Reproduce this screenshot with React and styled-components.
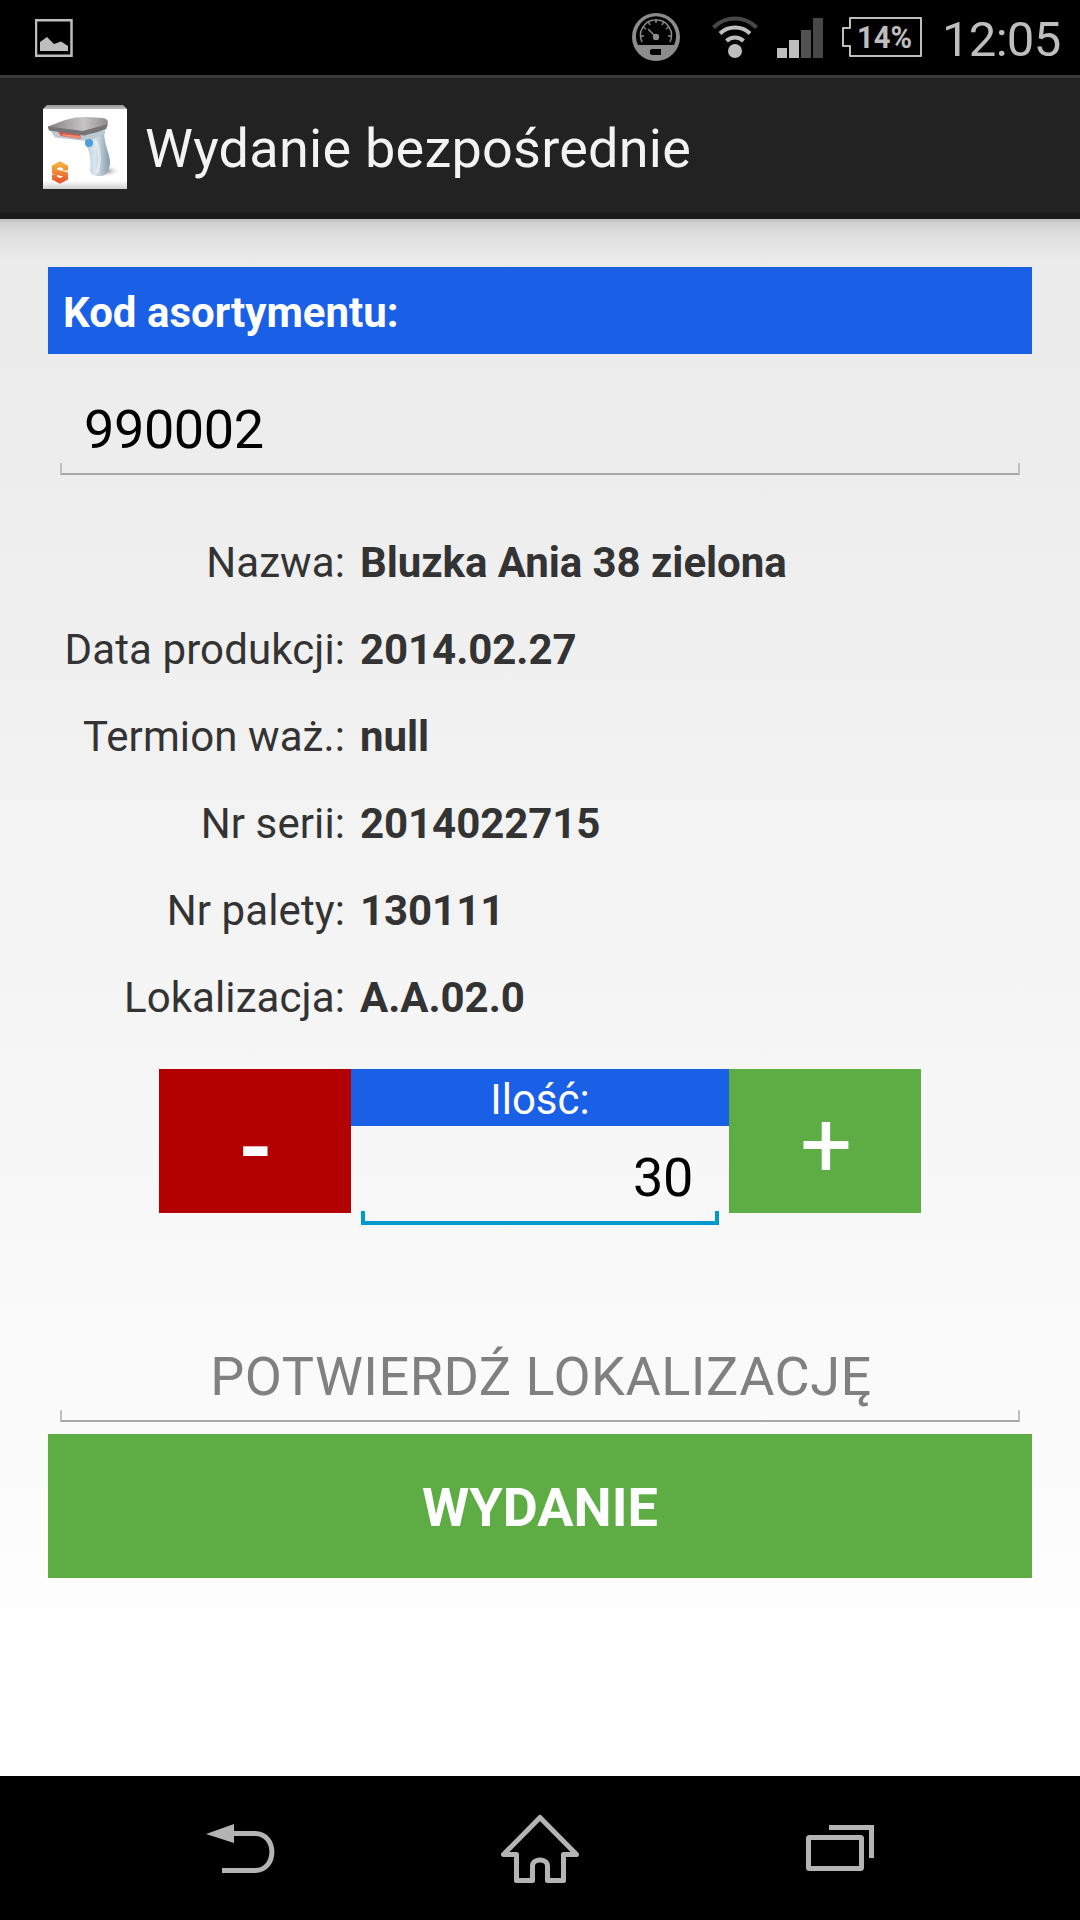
import React, { useState } from "react";
import styled, { createGlobalStyle } from "styled-components";

const GlobalStyle = createGlobalStyle`
  * {
    box-sizing: border-box;
  }
  body {
    margin: 0;
    font-family: Roboto, "Noto Sans", sans-serif;
  }
`;

const Screen = styled.div`
  display: flex;
  flex-direction: column;
  width: 1080px;
  height: 1920px;
  overflow: hidden;
  background-color: #000;
`;

const StatusBar = styled.div`
  display: flex;
  justify-content: space-between;
  height: 75px;
  padding: 0 20px 0 35px;
  color: #bebebe;
`;

const StatusIcons = styled.div`
  display: flex;
`;

const Clock = styled.span`
  width: 118px;
  font-size: 49px;
  line-height: 80px;
  letter-spacing: -0.7px;
  white-space: nowrap;
`;

const ActionBar = styled.header`
  display: flex;
  align-items: center;
  height: 144px;
  padding: 3px 43px 0;
  border-top: 3px solid #3a3a3a;
  border-bottom: 6px solid #1b1b1b;
  background-color: #222;
`;

const Title = styled.h1`
  margin: 3px 0 0 18px;
  color: #f3f3f3;
  font-size: 54px;
  font-weight: 400;
  line-height: 64px;
  letter-spacing: 0.25px;
`;

const Content = styled.main`
  flex: 1;
  padding: 48px 48px 0;
  background: linear-gradient(
      rgba(0, 0, 0, 0.16) 0px,
      rgba(0, 0, 0, 0.16) 3px,
      rgba(0, 0, 0, 0.11) 3px,
      rgba(0, 0, 0, 0.04) 20px,
      transparent 40px
    ),
    linear-gradient(#eaeaea, #fff 96%);
`;

const SectionLabel = styled.div`
  height: 87px;
  padding: 0 15px;
  background-color: #1960e7;
  color: white;
  font-size: 42px;
  font-weight: 700;
  line-height: 92px;
`;

const Field = styled.div`
  display: flex;
  flex-direction: column;
  margin: ${(props) => props.$margin};
`;

const Input = styled.input`
  width: 100%;
  height: ${(props) => props.$height};
  padding: ${(props) => props.$padding};
  border: 0;
  outline: 0;
  background: transparent;
  color: #000;
  font-family: inherit;
  font-size: 54px;
  letter-spacing: -0.4px;
  text-align: ${(props) => props.$align || "left"};

  &::placeholder {
    color: #808080;
    letter-spacing: 0.5px;
    opacity: 1;
  }
`;

const Underline = styled.div`
  height: ${(props) => (props.$active ? "14px" : "12px")};
  border: ${(props) => (props.$active ? "4px solid #0099cc" : "2px solid #c0c0c0")};
  border-top: 0;
  border-bottom-color: ${(props) => (props.$active ? "#0099cc" : "#a8a8a8")};
`;

const Details = styled.dl`
  display: grid;
  grid-template-columns: 297px 1fr;
  grid-auto-rows: 87px;
  column-gap: 15px;
  margin: 44px 0 0;
  color: #333;
  font-size: 42px;
  line-height: 87px;
`;

const Name = styled.dt`
  letter-spacing: 0.1px;
  text-align: right;
  white-space: nowrap;
`;

const Value = styled.dd`
  margin: 0;
  font-weight: 700;
  letter-spacing: -0.06px;
`;

const Stepper = styled.div`
  display: grid;
  grid-template-columns: 192px 378px 192px;
  justify-content: center;
  height: 156px;
  margin-top: 28px;
`;

const StepButton = styled.button`
  height: 144px;
  padding: ${(props) => props.$padding};
  border: 0;
  background-color: ${(props) => props.$color};
  color: white;
  font-family: inherit;
  font-size: ${(props) => props.$size};
  font-weight: ${(props) => props.$weight};
  line-height: 120px;
`;

const QuantityLabel = styled.div`
  height: 57px;
  background-color: #1960e7;
  color: white;
  font-size: 42px;
  line-height: 61px;
  text-align: center;
`;

const Submit = styled.button`
  width: 100%;
  height: 144px;
  margin-top: 12px;
  padding: 3px 0 0;
  border: 0;
  background-color: #5dad44;
  color: white;
  font-family: inherit;
  font-size: 54px;
  font-weight: 700;
`;

const NavBar = styled.nav`
  display: flex;
  height: 144px;
  padding-left: 206px;
`;

const PictureIcon = () => (
  <svg width="40" height="75" fill="#bebebe">
    <path d="M1 20.200H36.500V55.700H1Z" fill="none" stroke="#bebebe" strokeWidth="2.500" />
    <path d="M5 42 12 37 19 44 26 41.500 33 46V51H5Z" />
  </svg>
);

const GaugeIcon = () => (
  <svg width="80" height="75">
    <circle cx="24" cy="37" r="24" fill="#8c8c8c" />
    <path d="M6 45A20 20 0 1 1 42 45Z" fill="#000" />
    <path
      d="M10 42A15.500 15.500 0 1 1 38 42M8 36H12M11 27 14 29M16 21 18 25M24 19V23M32 21 30 25M37 27 34 29M40 36H36M16 29 24 37"
      fill="none"
      stroke="#8c8c8c"
      strokeWidth="1.500"
    />
    <circle cx="24" cy="37" r="3.200" fill="#8c8c8c" />
    <path d="M20 49H29V55H20L18 54V50Z" fill="#000" />
  </svg>
);

const WifiIcon = () => (
  <svg width="65" height="75" fill="none" strokeWidth="4">
    <path d="M1.500 27.500A30 30 0 0 1 44.500 27.500" stroke="#474747" />
    <path d="M8 33.500A22 22 0 0 1 38 33.500" stroke="#bebebe" />
    <path d="M14.500 41A12 12 0 0 1 31.500 41" stroke="#bebebe" />
    <circle cx="23" cy="51" r="7" fill="#bebebe" />
  </svg>
);

const SignalIcon = () => (
  <svg width="64" height="75">
    <path d="M0 48H10V58H0ZM12 40H22V58H12Z" fill="#bebebe" />
    <path d="M24 30H34V58H24Z" fill="#515151" />
    <path d="M36 18H46V58H36Z" fill="#474747" />
  </svg>
);

const BatteryIcon = () => (
  <svg width="101" height="75" fill="#bebebe">
    <path
      d="M9 18H80V56H9V46H2V28H9Z"
      fill="none"
      stroke="#bebebe"
      strokeWidth="2"
      strokeLinejoin="round"
    />
    <text x="16" y="48" fontSize="31" fontWeight="700" textLength="55" lengthAdjust="spacingAndGlyphs">
      14%
    </text>
  </svg>
);

const ScannerLogo = () => (
  <svg width="84" height="84">
    <defs>
      <linearGradient id="card" x2="0" y2="1">
        <stop offset="0" stopColor="#999" />
        <stop offset=".045" stopColor="#bbb" />
        <stop offset=".046" stopColor="#fff" />
        <stop offset=".9" stopColor="#fff" />
        <stop offset="1" stopColor="#cfcfcf" />
      </linearGradient>
      <linearGradient id="head">
        <stop offset="0" stopColor="#858182" />
        <stop offset=".6" stopColor="#c6c4c4" />
        <stop offset="1" stopColor="#8f8b8c" />
      </linearGradient>
      <linearGradient id="grip">
        <stop offset="0" stopColor="#b7c8d4" />
        <stop offset=".4" stopColor="#dce6ed" />
        <stop offset="1" stopColor="#8299aa" />
      </linearGradient>
      <linearGradient id="orange" x2="0" y2="1">
        <stop offset="0" stopColor="#f9ad3d" />
        <stop offset="1" stopColor="#e8592b" />
      </linearGradient>
      <radialGradient id="shade">
        <stop offset="0" stopColor="#777" />
        <stop offset="1" stopColor="#fff" stopOpacity="0" />
      </radialGradient>
    </defs>
    <path d="M4 0H80L84 4V84H0V4Z" fill="url(#card)" />
    <ellipse cx="62" cy="66" rx="16" ry="6" fill="url(#shade)" />
    <path d="M42 34 61 26C61 40 67 48 67 58 66 67 63 71 57 71 50 71 47 69 47 65 49 52 45 43 42 38Z" fill="url(#grip)" />
    <path d="M53 36C57 47 58 58 54 68" fill="none" stroke="#eef4f7" strokeWidth="3" opacity=".6" />
    <path d="M7 25 43 30 62 25V29L51 34 44 36 12 32.500Z" fill="#b9cad5" />
    <path d="M14 25 37 29 38 34 18 31Z" fill="#d95442" />
    <path d="M19 29 37 31 38 34 20 31Z" fill="#f28a72" />
    <path d="M5 21.500 22 15 33 12.500 44 12 60 13Q65 14 65 17L63 24 41 30.500 6 25Z" fill="url(#head)" />
    <path d="M5 21.500 40 26 65 19 63 24 55 27 41 30.500 6 25.500Z" fill="#777374" />
    <circle cx="46" cy="38" r="4" fill="#4d9fd9" />
    <path
      d="M22.500 65.500V62L17 59 11.500 62V66.500L22.500 69.500V73L17 76 11.500 73V69.500"
      fill="none"
      stroke="url(#orange)"
      strokeWidth="5"
    />
  </svg>
);

const BackIcon = () => (
  <svg width="295" height="144">
    <path d="M0 58 28 48V67Z" fill="#b4b4b4" />
    <path d="M27 57.500H49C71.500 57.500 71.500 94.500 49 94.500H16" fill="none" stroke="#b4b4b4" strokeWidth="5" />
  </svg>
);

const HomeIcon = () => (
  <svg width="305" height="144">
    <path
      d="M39 41.500 2.500 78.500H15.500V104.500H31.500V90C31.500 82 46.500 82 46.500 90V104.500H62.500V78.500H75.500L39 41.500Z"
      fill="none"
      stroke="#b4b4b4"
      strokeWidth="5"
      strokeLinejoin="round"
    />
  </svg>
);

const RecentsIcon = () => (
  <svg width="68" height="144" fill="none" stroke="#b4b4b4" strokeWidth="5">
    <rect x="2.500" y="61.500" width="53" height="31" rx="1" />
    <path d="M23 51.500H65.500V82" />
  </svg>
);

const details = [
  { name: "Nazwa:", value: "Bluzka Ania 38 zielona" },
  { name: "Data produkcji:", value: "2014.02.27" },
  { name: "Termion waż.:", value: "null" },
  { name: "Nr serii:", value: "2014022715" },
  { name: "Nr palety:", value: "130111" },
  { name: "Lokalizacja:", value: "A.A.02.0" },
];

const App = () => {
  const [code, setCode] = useState("990002");
  const [quantity, setQuantity] = useState(30);
  const [location, setLocation] = useState("");

  return (
    <>
      <GlobalStyle />
      <Screen>
        <StatusBar>
          <PictureIcon />
          <StatusIcons>
            <GaugeIcon />
            <WifiIcon />
            <SignalIcon />
            <BatteryIcon />
            <Clock>12:05</Clock>
          </StatusIcons>
        </StatusBar>
        <ActionBar>
          <ScannerLogo />
          <Title>Wydanie bezpośrednie</Title>
        </ActionBar>
        <Content>
          <SectionLabel>Kod asortymentu:</SectionLabel>
          <Field $margin="37px 12px 0">
            <Input
              $height="72px"
              $padding="4px 24px 0"
              value={code}
              onChange={(e) => setCode(e.target.value)}
            />
            <Underline />
          </Field>
          <Details>
            {details.map(({ name, value }) => (
              <React.Fragment key={name}>
                <Name>{name}</Name>
                <Value>{value}</Value>
              </React.Fragment>
            ))}
          </Details>
          <Stepper>
            <StepButton
              $color="#b30000"
              $size="88px"
              $weight={700}
              $padding="13px 0 0 1px"
              onClick={() => setQuantity(quantity - 1)}
            >
              -
            </StepButton>
            <div>
              <QuantityLabel>Ilość:</QuantityLabel>
              <Field $margin="0 10px">
                <Input
                  $height="85px"
                  $padding="18px 26px 0"
                  $align="right"
                  value={quantity}
                  onChange={(e) => setQuantity(Number(e.target.value))}
                />
                <Underline $active />
              </Field>
            </div>
            <StepButton
              $color="#5dad44"
              $size="92px"
              $weight={400}
              $padding="10px 0 0 2px"
              onClick={() => setQuantity(quantity + 1)}
            >
              +
            </StepButton>
          </Stepper>
          <Field $margin="113px 12px 0">
            <Input
              $height="72px"
              $padding="4px 23px 0 25px"
              $align="center"
              placeholder="POTWIERDŹ LOKALIZACJĘ"
              value={location}
              onChange={(e) => setLocation(e.target.value)}
            />
            <Underline />
          </Field>
          <Submit>WYDANIE</Submit>
        </Content>
        <NavBar>
          <BackIcon />
          <HomeIcon />
          <RecentsIcon />
        </NavBar>
      </Screen>
    </>
  );
};

export default App;
